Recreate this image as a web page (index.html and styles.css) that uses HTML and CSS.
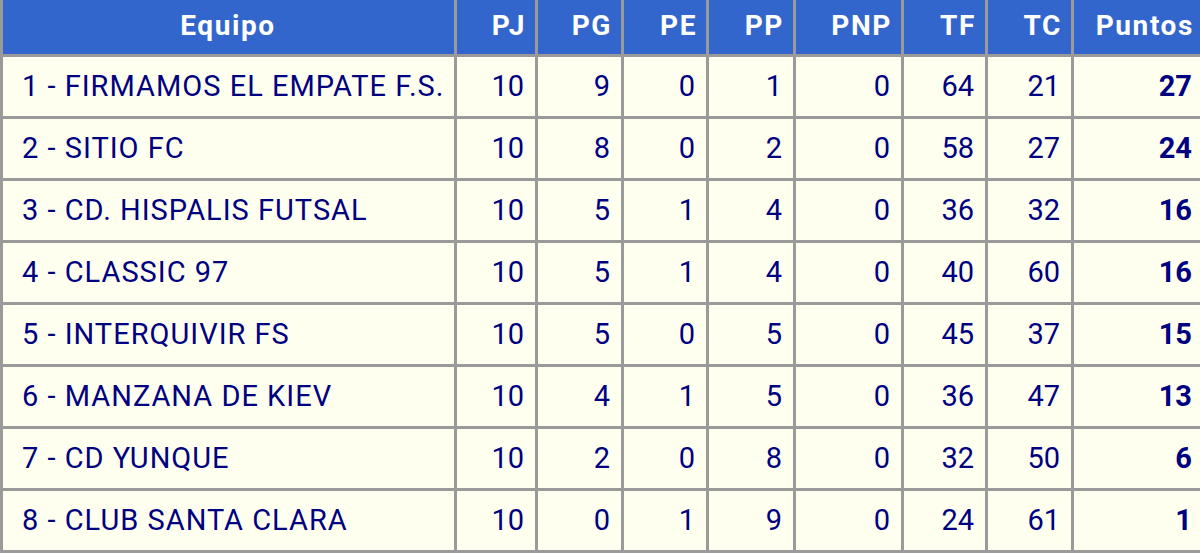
FILE: index.html
```html
<!DOCTYPE html>
<html lang="es">
<head>
<meta charset="utf-8">
<title>Clasificación</title>
<link rel="stylesheet" href="styles.css">
</head>
<body>
<div class="wrap">
<table class="standings">
  <colgroup>
    <col class="c-team"><col class="c-pj"><col class="c-pg"><col class="c-pe"><col class="c-pp"><col class="c-pnp"><col class="c-tf"><col class="c-tc"><col class="c-pts">
  </colgroup>
  <thead>
    <tr><th class="team">Equipo</th><th>PJ</th><th>PG</th><th>PE</th><th>PP</th><th>PNP</th><th>TF</th><th>TC</th><th>Puntos</th></tr>
  </thead>
  <tbody>
    <tr><td class="team">1 - FIRMAMOS EL EMPATE F.S.</td><td>10</td><td>9</td><td>0</td><td>1</td><td>0</td><td>64</td><td>21</td><td class="pts">27</td></tr>
    <tr><td class="team">2 - SITIO FC</td><td>10</td><td>8</td><td>0</td><td>2</td><td>0</td><td>58</td><td>27</td><td class="pts">24</td></tr>
    <tr><td class="team">3 - CD. HISPALIS FUTSAL</td><td>10</td><td>5</td><td>1</td><td>4</td><td>0</td><td>36</td><td>32</td><td class="pts">16</td></tr>
    <tr><td class="team">4 - CLASSIC 97</td><td>10</td><td>5</td><td>1</td><td>4</td><td>0</td><td>40</td><td>60</td><td class="pts">16</td></tr>
    <tr><td class="team">5 - INTERQUIVIR FS</td><td>10</td><td>5</td><td>0</td><td>5</td><td>0</td><td>45</td><td>37</td><td class="pts">15</td></tr>
    <tr><td class="team">6 - MANZANA DE KIEV</td><td>10</td><td>4</td><td>1</td><td>5</td><td>0</td><td>36</td><td>47</td><td class="pts">13</td></tr>
    <tr><td class="team">7 - CD YUNQUE</td><td>10</td><td>2</td><td>0</td><td>8</td><td>0</td><td>32</td><td>50</td><td class="pts">6</td></tr>
    <tr><td class="team">8 - CLUB SANTA CLARA</td><td>10</td><td>0</td><td>1</td><td>9</td><td>0</td><td>24</td><td>61</td><td class="pts">1</td></tr>
  </tbody>
</table>
</div>
</body>
</html>
```
FILE: styles.css
```css
html, body {
  margin: 0;
  padding: 0;
  background: #fffff0;
}
.wrap {
  width: 1200px;
  height: 553px;
  overflow: hidden;
}
.standings {
  border-collapse: collapse;
  table-layout: fixed;
  width: 1203px;
  font-family: Roboto, "Liberation Sans", sans-serif;
  font-size: 29px;
  color: #000080;
  background: #fffff0;
}
.c-team { width: 454px; }
.c-pj { width: 81px; }
.c-pg { width: 86px; }
.c-pe { width: 85px; }
.c-pp { width: 87px; }
.c-pnp { width: 108px; }
.c-tf { width: 84px; }
.c-tc { width: 86px; }
.c-pts { width: 132px; }

.standings th,
.standings td {
  border: 3px solid #9a9a9a;
  padding: 0 11px 0 8px;
  text-align: right;
  vertical-align: middle;
  white-space: nowrap;
  overflow: hidden;
}
.standings thead tr { height: 55px; }
.standings tbody tr { height: 62px; }
.standings th {
  border-top: none;
  background: #3366cc;
  color: #ffffff;
  font-weight: 700;
  font-size: 28px;
  letter-spacing: 1.6px;
  padding-right: 9px;
  padding-bottom: 3px;
}
.standings th.team {
  text-align: center;
}
.standings td.team {
  text-align: left;
  padding-left: 19px;
  letter-spacing: 1px;
}
.standings td.pts {
  font-weight: 700;
}
```
